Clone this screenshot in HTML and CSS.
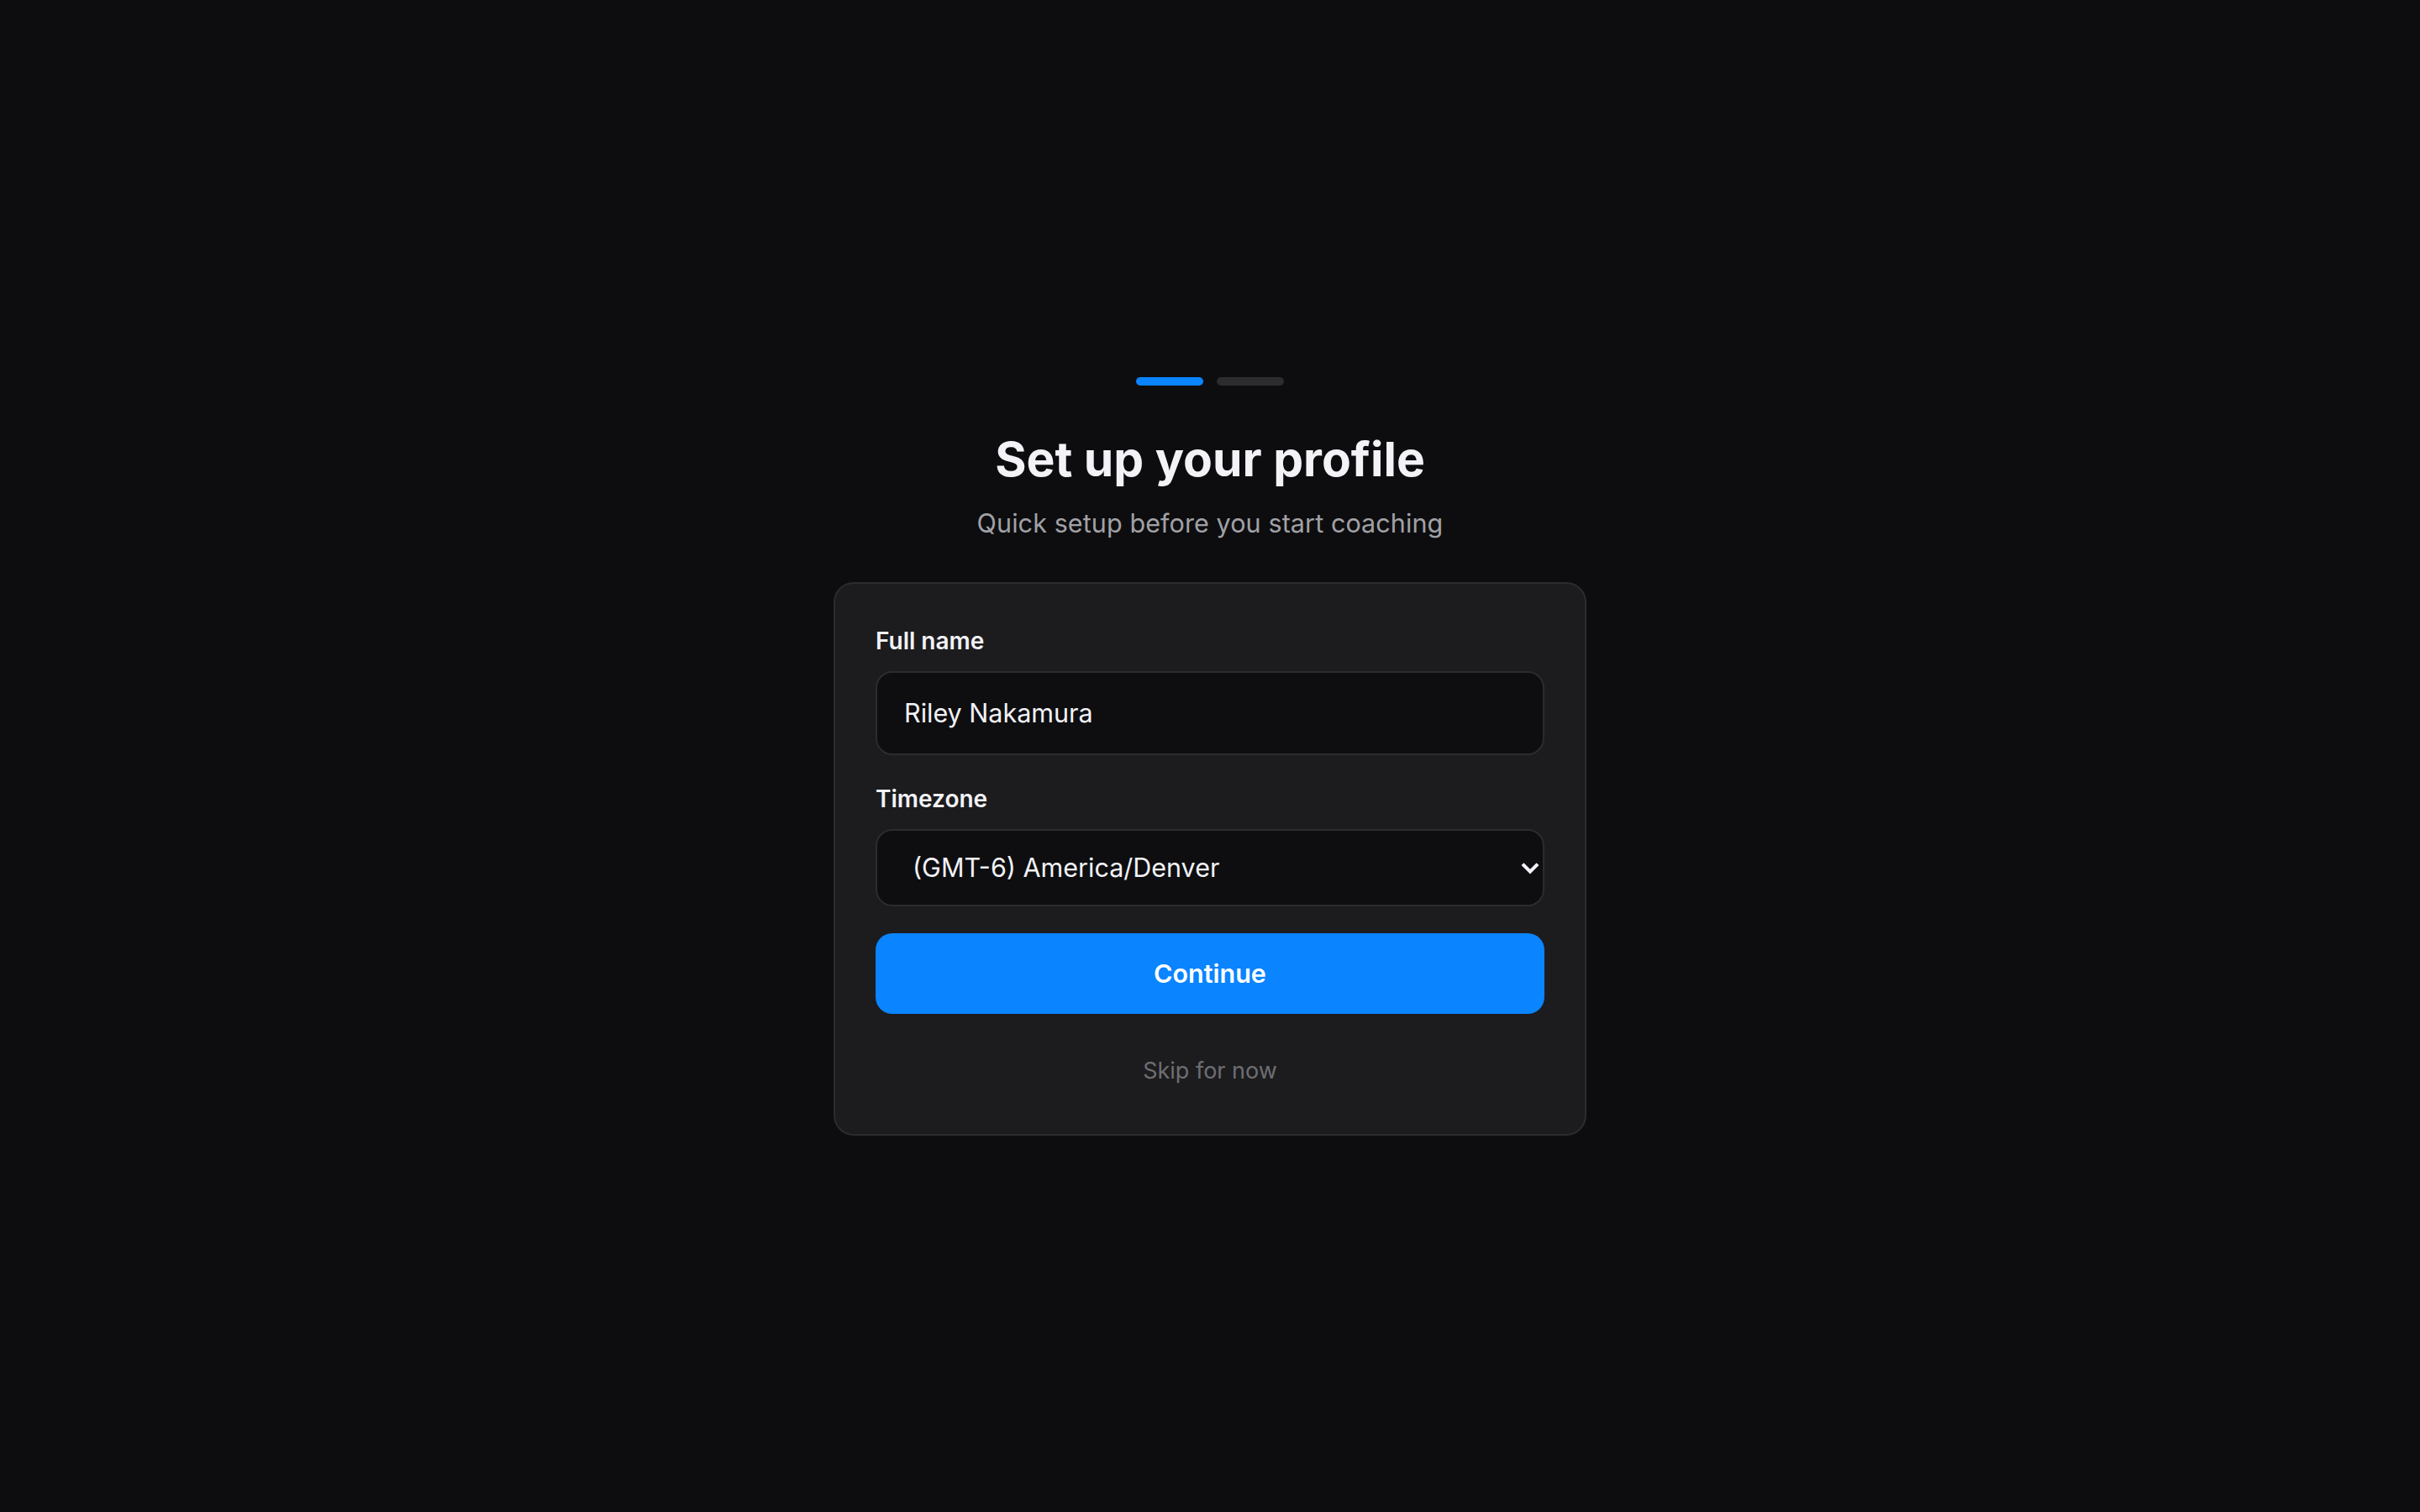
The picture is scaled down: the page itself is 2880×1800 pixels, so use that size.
FILE: index.html
```html
<!DOCTYPE html>
<html lang="en">
<head>
<meta charset="utf-8">
<title>Set up your profile</title>
<link rel="stylesheet" href="styles.css">
</head>
<body>
<main class="onboard">
  <div class="steps">
    <span class="step step-active"></span>
    <span class="step"></span>
  </div>
  <h1 class="title">Set up your profile</h1>
  <p class="subtitle">Quick setup before you start coaching</p>
  <form class="card">
    <label class="label" for="fullname">Full name</label>
    <input class="input" id="fullname" type="text" value="Riley Nakamura">
    <label class="label label-gap" for="tz">Timezone</label>
    <div class="select-wrap">
      <select class="select" id="tz">
        <option>(GMT-6) America/Denver</option>
      </select>
      <svg class="chevron" viewBox="0 0 22 14" width="22" height="14" aria-hidden="true">
        <path d="M3.5 3 L11 10.5 L18.5 3" fill="none" stroke="#f2f2f7" stroke-width="4.2" stroke-linecap="square" stroke-linejoin="miter"/>
      </svg>
    </div>
    <button class="btn" type="button">Continue</button>
    <div class="skip-row"><a class="skip" href="#">Skip for now</a></div>
  </form>
</main>
</body>
</html>
```

FILE: styles.css
```css
* { box-sizing: border-box; }

html, body {
  margin: 0;
  padding: 0;
  background: #0d0d0f;
}

body {
  min-height: 100vh;
  display: flex;
  align-items: center;
  justify-content: center;
  font-family: Inter, "Noto Sans", "Liberation Sans", sans-serif;
  color: #f2f2f7;
}

.onboard {
  width: 896px;
  display: flex;
  flex-direction: column;
  align-items: center;
}

.steps {
  display: flex;
  gap: 16px;
  margin-bottom: 54px;
}

.step {
  width: 80px;
  height: 10px;
  border-radius: 5px;
  background: #2c2c2e;
}

.step-active { background: #0a84ff; }

.title {
  margin: 0;
  font-size: 57px;
  line-height: 68px;
  font-weight: 700;
  letter-spacing: 0;
  color: #f2f2f7;
}

.subtitle {
  margin: 20px 0 48px;
  font-size: 30.5px;
  line-height: 44px;
  letter-spacing: 0.1px;
  color: #a1a1a6;
}

.card {
  width: 896px;
  background: #1c1c1e;
  border: 2px solid #2c2c2e;
  border-radius: 24px;
  padding: 48px 48px 52px;
  display: flex;
  flex-direction: column;
}

.label {
  font-size: 28px;
  line-height: 40px;
  font-weight: 600;
  color: #f2f2f7;
  margin-bottom: 16px;
}

.label-gap { margin-top: 32px; }

.input {
  height: 100px;
  width: 100%;
  background: #0e0e10;
  border: 2px solid #2c2c2e;
  border-radius: 20px;
  padding: 0 32px;
  font-family: inherit;
  font-size: 30.5px;
  color: #f2f2f7;
  outline: none;
}

.select-wrap {
  position: relative;
}

.select {
  -webkit-appearance: none;
  appearance: none;
  height: 92px;
  width: 100%;
  background: #0e0e10;
  border: 2px solid #2c2c2e;
  border-radius: 20px;
  padding: 0 60px 0 42px;
  font-family: inherit;
  font-size: 30.5px;
  color: #f2f2f7;
  outline: none;
}

.chevron {
  position: absolute;
  right: 6px;
  top: 50%;
  transform: translateY(-42%);
  pointer-events: none;
}

.btn {
  margin-top: 32px;
  height: 96px;
  width: 100%;
  border: none;
  border-radius: 20px;
  background: #0a84ff;
  color: #ffffff;
  font-family: inherit;
  font-size: 30.5px;
  font-weight: 600;
}

.skip-row {
  margin-top: 48px;
  text-align: center;
  line-height: 40px;
}

.skip {
  font-size: 27px;
  color: #6e6e73;
  text-decoration: none;
}
```
